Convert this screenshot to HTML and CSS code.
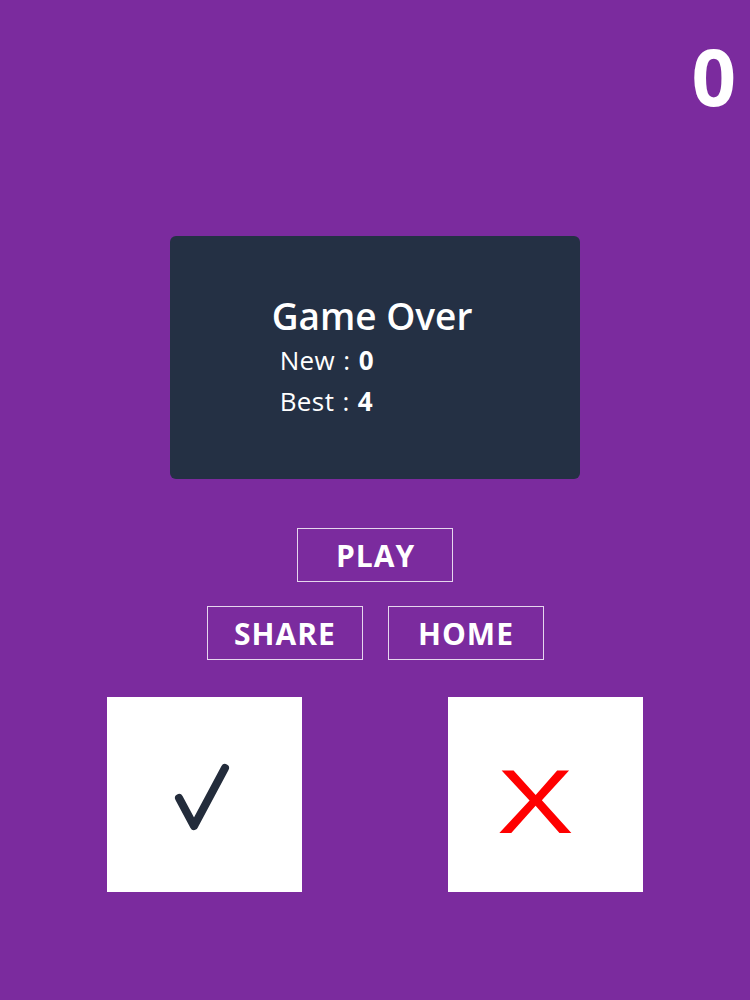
FILE: index.html
```html
<!DOCTYPE html>
<html lang="en">
<head>
<meta charset="utf-8">
<title>Game Over</title>
<link rel="stylesheet" href="styles.css">
</head>
<body>
<main class="screen">
  <header class="topbar">
    <span class="score">0</span>
  </header>

  <section class="result-card">
    <div class="result-text">
      <h1 class="result-title">Game Over</h1>
      <p class="result-row">New : <b>0</b></p>
      <p class="result-row">Best : <b>4</b></p>
    </div>
  </section>

  <nav class="actions">
    <div class="action-row">
      <button class="action-btn">PLAY</button>
    </div>
    <div class="action-row">
      <button class="action-btn">SHARE</button>
      <button class="action-btn">HOME</button>
    </div>
  </nav>

  <div class="answers">
    <button class="answer answer-yes" aria-label="Yes">
      <svg class="check" width="195" height="195" viewBox="0 0 195 195">
        <path d="M72 101 L87 129 L118 71" fill="none" stroke="#232c3b" stroke-width="8" stroke-linecap="round" stroke-linejoin="round"/>
      </svg>
    </button>
    <button class="answer answer-no"><span class="cross">X</span></button>
  </div>
</main>
</body>
</html>
```

FILE: styles.css
```css
html, body {
  margin: 0;
  padding: 0;
}

body {
  background: #7b2b9e;
  font-family: "Open Sans", "Noto Sans", sans-serif;
  color: #ffffff;
  width: 750px;
  height: 1000px;
  overflow: hidden;
}

.screen {
  display: flex;
  flex-direction: column;
  align-items: center;
  height: 1000px;
}

.topbar {
  align-self: stretch;
  display: flex;
  justify-content: flex-end;
  padding: 37px 14px 0 0;
  height: 110px;
  box-sizing: border-box;
}

.score {
  font-size: 78px;
  font-weight: 700;
  line-height: 1;
}

.result-card {
  margin-top: 126px;
  width: 410px;
  height: 243px;
  box-sizing: border-box;
  background: #243044;
  border-radius: 6px;
  display: flex;
  justify-content: center;
  align-items: flex-start;
  padding: 56px 6px 0 0;
}

.result-text {
  display: flex;
  flex-direction: column;
}

.result-title {
  margin: 0;
  font-size: 37px;
  font-weight: 600;
  line-height: 48px;
}

.result-row {
  margin: 0;
  padding-left: 8px;
  font-size: 26px;
  font-weight: 400;
  line-height: 41px;
  letter-spacing: 0.4px;
  word-spacing: 1px;
}

.result-row b {
  font-weight: 700;
}

.actions {
  margin-top: 49px;
  display: flex;
  flex-direction: column;
  gap: 24px;
}

.action-row {
  display: flex;
  justify-content: center;
  gap: 25px;
}

.action-btn {
  width: 156px;
  height: 54px;
  box-sizing: border-box;
  background: transparent;
  border: 1px solid #e6d6ee;
  color: #ffffff;
  font-family: inherit;
  font-size: 30px;
  font-weight: 700;
  letter-spacing: 1px;
  padding: 0 0 0 1px;
  cursor: pointer;
}

.answers {
  margin-top: 37px;
  display: flex;
  gap: 146px;
}

.answer {
  width: 195px;
  height: 195px;
  background: #ffffff;
  border: none;
  padding: 0;
  display: flex;
  align-items: center;
  justify-content: center;
}

.check {
  display: block;
}

.answer-no {
  padding: 14px 20px 0 0;
  box-sizing: border-box;
}

.cross {
  font-family: "Liberation Sans", Arial, sans-serif;
  font-size: 91px;
  color: #ff0000;
  line-height: 1;
  display: inline-block;
  transform: scaleX(1.27);
}
```
